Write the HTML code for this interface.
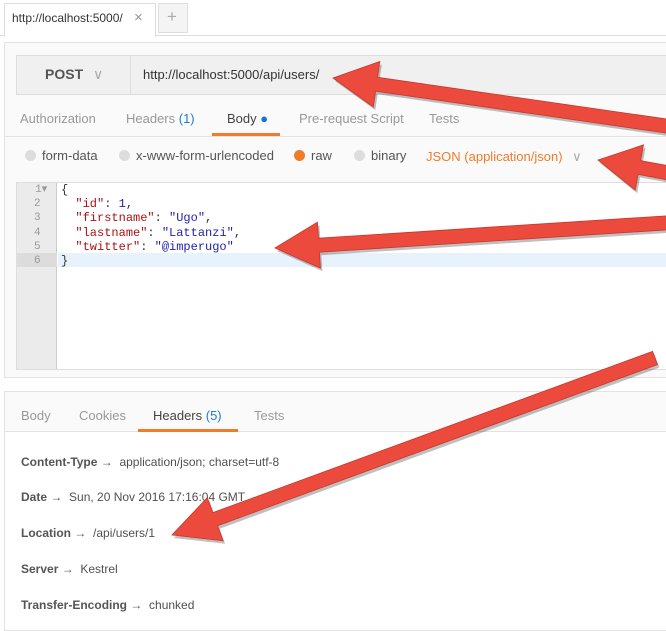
<!DOCTYPE html>
<html><head><meta charset="utf-8"><style>
*{margin:0;padding:0;box-sizing:border-box}
body{width:666px;height:617px;overflow:hidden;background:#fff;font-family:"Liberation Sans",sans-serif;position:relative;font-size:13px;color:#505050}
.a{position:absolute;white-space:nowrap}
.mono{font-family:"Liberation Mono",monospace;font-size:12px}
.r{display:inline-block;width:11px;height:11px;border-radius:50%;background:#ddd;margin-right:6px;vertical-align:-1px}
</style></head><body>
<div class="a" style="left:0;top:0;width:666px;height:36px;background:#fff;border-bottom:1px solid #ddd"></div>
<div class="a" style="left:4px;top:3px;width:152px;height:34px;background:#fff;border:1px solid #ddd;border-bottom:none"></div>
<div class="a" style="left:12px;top:11px;font-size:12px;color:#333">http://localhost:5000/</div>
<div class="a" style="left:134px;top:9px;font-size:15px;color:#999">×</div>
<div class="a" style="left:158px;top:3px;width:30px;height:30px;background:#f4f4f4;border:1px solid #ddd"></div>
<div class="a" style="left:167px;top:7px;font-size:17px;color:#aaa">+</div>

<div class="a" style="left:4px;top:42px;width:670px;height:336px;background:#fafafa;border:1px solid #e2e2e2"></div>
<div class="a" style="left:16px;top:55px;width:660px;height:40px;background:#f0f0f0;border:1px solid #ddd"></div>
<div class="a" style="left:130px;top:55px;width:1px;height:40px;background:#ddd"></div>
<div class="a" style="left:45px;top:66px;font-size:14px;font-weight:bold;color:#555">POST <span style="font-weight:normal;color:#aaa;margin-left:6px">∨</span></div>
<div class="a" style="left:143px;top:67px;font-size:13px;color:#333">http://localhost:5000/api/users/</div>

<div class="a" style="left:20px;top:111px;color:#999">Authorization</div>
<div class="a" style="left:126px;top:111px;color:#999">Headers <span style="color:#1e7bd6">(1)</span></div>
<div class="a" style="left:227px;top:111px;color:#444">Body <span style="color:#1a6fe0">●</span></div>
<div class="a" style="left:299px;top:111px;color:#999">Pre-request Script</div>
<div class="a" style="left:429px;top:111px;color:#999">Tests</div>
<div class="a" style="left:4px;top:136px;width:666px;height:1px;background:#e2e2e2"></div>
<div class="a" style="left:212px;top:133px;width:68px;height:3px;background:#f07b2a"></div>

<div class="a" style="top:148px;left:25px;color:#555"><span class="r"></span>form-data</div>
<div class="a" style="top:148px;left:119px;color:#555"><span class="r"></span>x-www-form-urlencoded</div>
<div class="a" style="top:148px;left:294px;color:#555"><span class="r" style="background:#f07b2a"></span>raw</div>
<div class="a" style="top:148px;left:354px;color:#555"><span class="r"></span>binary</div>
<div class="a" style="top:149px;left:426px;color:#f07b2a">JSON (application/json) <span style="color:#aaa;margin-left:6px">∨</span></div>

<div class="a" style="left:16px;top:182px;width:660px;height:188px;background:#fff;border:1px solid #ddd"></div>
<div class="a" style="left:17px;top:183px;width:40px;height:186px;background:#ebebeb;border-right:1px solid #ccc"></div>
<div class="a" style="left:17px;top:253px;width:40px;height:14px;background:#dcdcdc"></div>
<div class="a" style="left:58px;top:253px;width:620px;height:14px;background:#e8f2fc"></div>
<div class="a mono" style="left:34px;top:183px;line-height:14.2px;color:#999;text-align:right;font-size:11px">1▾<br>2&nbsp;<br>3&nbsp;<br>4&nbsp;<br>5&nbsp;<br>6&nbsp;</div>
<div class="a mono" style="left:61px;top:183px;line-height:14.2px;color:#333">{<br>&nbsp;&nbsp;<span style="color:#a11">"id"</span>: <span style="color:#228">1</span>,<br>&nbsp;&nbsp;<span style="color:#a11">"firstname"</span>: <span style="color:#22a">"Ugo"</span>,<br>&nbsp;&nbsp;<span style="color:#a11">"lastname"</span>: <span style="color:#22a">"Lattanzi"</span>,<br>&nbsp;&nbsp;<span style="color:#a11">"twitter"</span>: <span style="color:#22a">"@imperugo"</span><br>}</div>

<div class="a" style="left:4px;top:391px;width:670px;height:240px;background:#fff;border:1px solid #e2e2e2"></div>
<div class="a" style="left:5px;top:392px;width:668px;height:40px;background:#fafafa;border-bottom:1px solid #e2e2e2"></div>
<div class="a" style="left:21px;top:408px;color:#999">Body</div>
<div class="a" style="left:79px;top:408px;color:#999">Cookies</div>
<div class="a" style="left:153px;top:408px;color:#444">Headers <span style="color:#1e7bd6">(5)</span></div>
<div class="a" style="left:254px;top:408px;color:#999">Tests</div>
<div class="a" style="left:138px;top:429px;width:100px;height:3px;background:#f07b2a"></div>

<div class="a" style="left:21px;top:455px;font-size:12px"><b style="color:#555">Content-Type →</b> &nbsp;application/json; charset=utf-8</div>
<div class="a" style="left:21px;top:490px;font-size:12px"><b style="color:#555">Date →</b> &nbsp;Sun, 20 Nov 2016 17:16:04 GMT</div>
<div class="a" style="left:21px;top:526px;font-size:12px"><b style="color:#555">Location →</b> &nbsp;/api/users/1</div>
<div class="a" style="left:21px;top:562px;font-size:12px"><b style="color:#555">Server →</b> &nbsp;Kestrel</div>
<div class="a" style="left:21px;top:598px;font-size:12px"><b style="color:#555">Transfer-Encoding →</b> &nbsp;chunked</div>

<svg id="s" class="a" style="left:0;top:0" width="666" height="617"></svg>
<script>
function arrow(x1,y1,x2,y2,w,hw,hl){
 var dx=x2-x1,dy=y2-y1,L=Math.hypot(dx,dy),ux=dx/L,uy=dy/L,px=-uy,py=ux;
 var bx=x2-ux*hl,by=y2-uy*hl;
 var p=[[x1+px*w/2,y1+py*w/2],[bx+px*w/2,by+py*w/2],[bx+px*hw/2,by+py*hw/2],[x2,y2],[bx-px*hw/2,by-py*hw/2],[bx-px*w/2,by-py*w/2],[x1-px*w/2,y1-py*w/2]];
 var s=p.map(function(q){return q[0].toFixed(1)+","+q[1].toFixed(1)}).join(" ");
 var s2=p.map(function(q){return (q[0]+2).toFixed(1)+","+(q[1]+3).toFixed(1)}).join(" ");
 return '<polygon points="'+s2+'" fill="rgba(0,0,0,0.25)"/><polygon points="'+s+'" fill="#ec4a3c" stroke="#c8372b" stroke-width="0.8"/>';
}
document.getElementById('s').innerHTML=
 arrow(680,128,333,78,14,46,44)+
 arrow(680,175,598,160,14,46,42)+
 arrow(680,222,275,248,14,46,44)+
 arrow(655,358,172,535,14,46,46);
</script>
</body></html>
